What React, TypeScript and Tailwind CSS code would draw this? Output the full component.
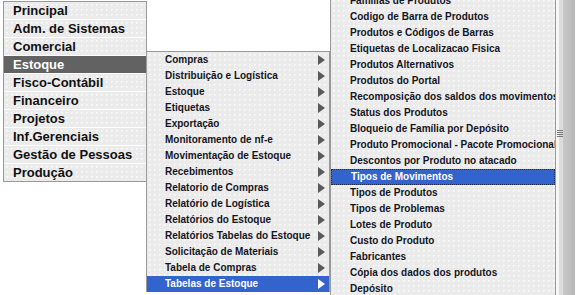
const mainMenu = [
  "Principal",
  "Adm. de Sistemas",
  "Comercial",
  "Estoque",
  "Fisco-Contábil",
  "Financeiro",
  "Projetos",
  "Inf.Gerenciais",
  "Gestão de Pessoas",
  "Produção",
];

const estoqueMenu = [
  "Compras",
  "Distribuição e Logística",
  "Estoque",
  "Etiquetas",
  "Exportação",
  "Monitoramento de nf-e",
  "Movimentação de Estoque",
  "Recebimentos",
  "Relatorio de Compras",
  "Relatório de Logística",
  "Relatórios do Estoque",
  "Relatórios Tabelas do Estoque",
  "Solicitação de Materiais",
  "Tabela de Compras",
  "Tabelas de Estoque",
];

const tabelasMenu = [
  "Famílias de Produtos",
  "Codigo de Barra de Produtos",
  "Produtos e Códigos de Barras",
  "Etiquetas de Localizacao Fisica",
  "Produtos Alternativos",
  "Produtos do Portal",
  "Recomposição dos saldos dos movimentos",
  "Status dos Produtos",
  "Bloqueio de Família por Depósito",
  "Produto Promocional - Pacote Promocional",
  "Descontos por Produto no atacado",
  "Tipos de Movimentos",
  "Tipos de Produtos",
  "Tipos de Problemas",
  "Lotes de Produto",
  "Custo do Produto",
  "Fabricantes",
  "Cópia dos dados dos produtos",
  "Depósito",
];

const dotted =
  "bg-[#ebebeb] bg-[radial-gradient(#f8f8f8_1px,transparent_1px)] bg-[size:5px_5px]";

function Arrow({ active }: { active: boolean }) {
  return (
    <svg width="7" height="10" viewBox="0 0 7 10" className="shrink-0">
      <polygon points="0,0 7,5 0,10" fill={active ? "#ffffff" : "#5a5a5a"} />
    </svg>
  );
}

export default function App() {
  return (
    <div className="h-[295px] w-[576px] overflow-hidden bg-white font-['Liberation_Sans',Arial,sans-serif] font-bold">
      <div className="flex items-start">
        {/* Menu principal */}
        <div className="ml-[3px] mt-[1px] w-[144px] border border-[#9a9a9a] bg-white">
          {mainMenu.map((item) => {
            const active = item === "Estoque";
            return (
              <div
                key={item}
                className={`flex h-[18px] items-center border-b border-white pl-[9px] text-[13px] leading-none last:h-[17px] last:border-b-0 ${
                  active ? "bg-[#626262] text-white" : `${dotted} text-[#111]`
                }`}
              >
                {item}
              </div>
            );
          })}
        </div>

        {/* Submenu Estoque */}
        <div className={`-ml-[1px] mt-[51px] w-[184px] border border-b-0 border-[#9a9a9a] ${dotted}`}>
          {estoqueMenu.map((item) => {
            const active = item === "Tabelas de Estoque";
            return (
              <div
                key={item}
                className={`flex h-[16px] items-center justify-between pl-[18px] pr-[4px] text-[10px] leading-none ${
                  active ? "bg-[#3363cc] text-white" : "text-[#15151f]"
                }`}
              >
                <span>{item}</span>
                <Arrow active={active} />
              </div>
            );
          })}
        </div>

        {/* Submenu Tabelas de Estoque */}
        <div className={`-mt-[7px] w-[226px] border-x border-[#9a9a9a] ${dotted}`}>
          {tabelasMenu.map((item) => {
            const active = item === "Tipos de Movimentos";
            return (
              <div
                key={item}
                className={`flex h-[16px] items-center overflow-hidden whitespace-nowrap pl-[19px] text-[10px] leading-none ${
                  active
                    ? "border border-dotted border-[#1b2a55] bg-[#3363cc] pl-[18px] text-white"
                    : "text-[#15151f]"
                }`}
              >
                {item}
              </div>
            );
          })}
        </div>

        {/* Barra lateral */}
        <div className="flex h-[295px] w-[19px]">
          <div className="w-[3px] bg-[#f6f6f6]" />
          <div className="w-[4px] bg-[#dcdcdc]" />
          <div className="flex w-[12px] flex-col items-start bg-gradient-to-r from-[#c9c9c9] to-[#b6b6b6]">
            <div className="-ml-[6px] mt-[130px] flex flex-col gap-[1px]">
              <div className="h-[1px] w-[6px] bg-[#777]" />
              <div className="h-[1px] w-[6px] bg-[#777]" />
              <div className="h-[1px] w-[6px] bg-[#777]" />
              <div className="h-[1px] w-[6px] bg-[#777]" />
            </div>
          </div>
        </div>
      </div>
    </div>
  );
}
